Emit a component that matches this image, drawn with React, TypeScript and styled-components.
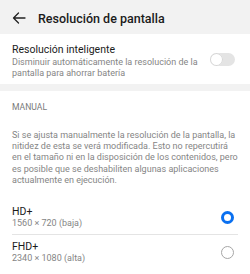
import React from "react";
import styled, { createGlobalStyle } from "styled-components";

const Global = createGlobalStyle`
  html, body { margin: 0; padding: 0; background: #ffffff; }
  body { font-family: Roboto, "Noto Sans", "Liberation Sans", sans-serif; -webkit-font-smoothing: antialiased; }
  * { box-sizing: border-box; }
`;

const Page = styled.div`
  width: 250px;
  height: 274px;
  background: #ffffff;
  overflow: hidden;
  display: flex;
  flex-direction: column;
`;

const Header = styled.header`
  height: 34px;
  flex-shrink: 0;
  background: #f2f2f2;
  display: flex;
  align-items: center;
  padding: 2px 0 0 12px;
  gap: 12px;
`;

const Title = styled.h1`
  margin: 0;
  font-size: 12.5px;
  font-weight: 500;
  color: #1b1b1b;
`;

const Card = styled.section`
  background: #ffffff;
  padding: 9px 15px 5px 12px;
  display: flex;
  align-items: center;
  justify-content: space-between;
`;

const Texts = styled.div`
  display: flex;
  flex-direction: column;
`;

const Primary = styled.div`
  font-size: 10.5px;
  line-height: 13px;
  color: #1b1b1b;
`;

const Secondary = styled.div<{ $w?: number; $gap?: number }>`
  font-size: 9px;
  line-height: 11px;
  color: #858585;
  margin-top: ${(p) => p.$gap ?? 0}px;
  width: ${(p) => p.$w ?? 200}px;
`;

const Toggle = styled.div`
  width: 25px;
  height: 13px;
  margin-bottom: 3px;
  border-radius: 7px;
  background: #e4e4e4;
  position: relative;
  flex-shrink: 0;
  &::after {
    content: "";
    position: absolute;
    left: 0;
    top: 0;
    width: 13px;
    height: 13px;
    border-radius: 50%;
    background: #ffffff;
    box-shadow: inset 0 0 0 1px #d6d6d6;
  }
`;

const Gap = styled.div`
  height: 7px;
  flex-shrink: 0;
  background: #f2f2f2;
`;

const Section = styled.section`
  padding: 11px 12px 0 12px;
  display: flex;
  flex-direction: column;
`;

const Label = styled.div`
  font-size: 8.6px;
  line-height: 10px;
  color: #7a7a7a;
  height: 22px;
`;

const Paragraph = styled.p`
  margin: 6px 0 0 0;
  font-size: 9px;
  line-height: 11.2px;
  color: #858585;
`;

const OptionList = styled.div`
  margin-top: 14px;
  display: flex;
  flex-direction: column;
`;

const Option = styled.div<{ $divider?: boolean }>`
  display: flex;
  align-items: center;
  justify-content: space-between;
  padding: 5px 4px 5px 0;
  border-bottom: 1px solid ${(p) => (p.$divider ? "#e4e4e4" : "transparent")};
`;

const Radio = styled.div<{ $on?: boolean }>`
  width: 13px;
  height: 13px;
  border-radius: 50%;
  border: ${(p) => (p.$on ? "3.5px solid #0a70f0" : "1px solid #a6a6a6")};
  background: #ffffff;
  flex-shrink: 0;
`;

const BackIcon = () => (
  <svg width="14" height="12" viewBox="0 0 14 12" fill="none">
    <path d="M13 6H1.5M6.5 1L1.5 6l5 5" stroke="#222" strokeWidth="1.3" strokeLinecap="round" strokeLinejoin="round" />
  </svg>
);

export default function App() {
  return (
    <Page>
      <Global />
      <Header>
        <BackIcon />
        <Title>Resolución de pantalla</Title>
      </Header>
      <Card>
        <Texts>
          <Primary>Resolución inteligente</Primary>
          <Secondary $w={196} $gap={1}>Disminuir automáticamente la resolución de la pantalla para ahorrar batería</Secondary>
        </Texts>
        <Toggle />
      </Card>
      <Gap />
      <Section>
        <Label>MANUAL</Label>
        <Paragraph>
          Si se ajusta manualmente la resolución de la pantalla, la nitidez de esta se verá modificada. Esto no repercutirá en el tamaño ni en la disposición de los contenidos, pero es posible que se deshabiliten algunas aplicaciones actualmente en ejecución.
        </Paragraph>
        <OptionList>
          <Option $divider>
            <Texts>
              <Primary>HD+</Primary>
              <Secondary>1560 × 720 (baja)</Secondary>
            </Texts>
            <Radio $on />
          </Option>
          <Option>
            <Texts>
              <Primary>FHD+</Primary>
              <Secondary>2340 × 1080 (alta)</Secondary>
            </Texts>
            <Radio />
          </Option>
        </OptionList>
      </Section>
    </Page>
  );
}
